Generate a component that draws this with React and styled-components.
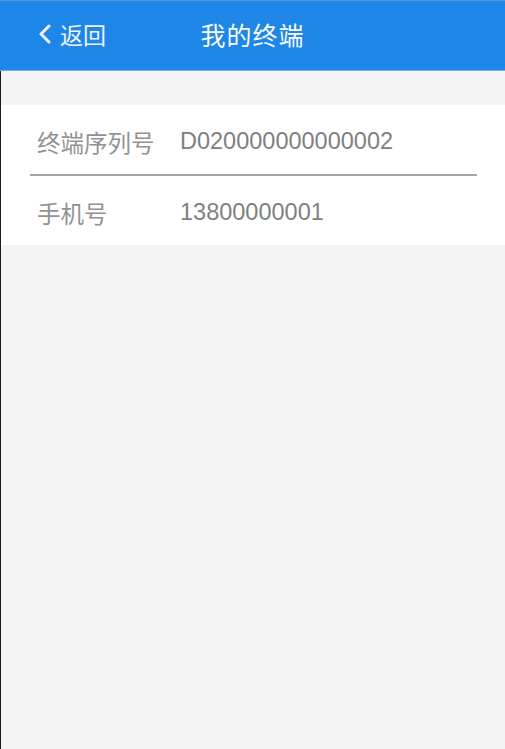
import React from 'react';
import styled, { createGlobalStyle } from 'styled-components';

const GlobalStyle = createGlobalStyle`
  html, body {
    margin: 0;
    padding: 0;
    background: #f4f4f4;
  }
  body {
    font-family: "Liberation Sans", "Noto Sans CJK SC", sans-serif;
  }
`;

const Page = styled.div`
  min-height: 749px;
  display: flex;
  flex-direction: column;
  background: #f4f4f4;
`;

const Header = styled.header`
  background: #1e86e6;
  border-top: 1px solid #4f97dc;
  border-bottom: 1px solid #6fb0f0;
  box-sizing: border-box;
  height: 71px;
  display: grid;
  grid-template-columns: 1fr auto 1fr;
  align-items: center;
  color: #fff;
`;

const Back = styled.div`
  display: flex;
  align-items: center;
  gap: 9px;
  padding-left: 38px;
  font-size: 23px;
  color: #eef5fd;
  margin-top: -4px;
`;

const Title = styled.h1`
  margin: 0 0 4px;
  font-size: 25px;
  font-weight: normal;
  color: #f7fbff;
  letter-spacing: 1px;
`;

const Body = styled.main`
  flex: 1;
  border-left: 1px solid #1a1a1a;
  padding-top: 34px;
`;

const Card = styled.section`
  background: #fff;
  display: flex;
  flex-direction: column;
`;

const Row = styled.div`
  height: 69px;
  box-sizing: border-box;
  padding: 4px 0 0 36px;
  display: flex;
  align-items: center;
  font-size: 23.5px;
`;

const Label = styled.span`
  width: 143px;
  color: #929292;
`;

const Value = styled.span`
  color: #808080;
`;

const Divider = styled.hr`
  margin: 0 28px 0 29px;
  border: none;
  height: 2px;
  background: #a5a5a5;
`;

const BackIcon = () => (
  <svg width="13" height="20" viewBox="0 0 13 20">
    <path d="M11 2 L3 10 L11 18" fill="none" stroke="#eef5fd" strokeWidth="3" strokeLinecap="round" strokeLinejoin="round" />
  </svg>
);

export default function App() {
  return (
    <>
      <GlobalStyle />
      <Page>
        <Header>
          <Back>
            <BackIcon />
            返回
          </Back>
          <Title>我的终端</Title>
          <div />
        </Header>
        <Body>
          <Card>
            <Row>
              <Label>终端序列号</Label>
              <Value>D020000000000002</Value>
            </Row>
            <Divider />
            <Row>
              <Label>手机号</Label>
              <Value>13800000001</Value>
            </Row>
          </Card>
        </Body>
      </Page>
    </>
  );
}
